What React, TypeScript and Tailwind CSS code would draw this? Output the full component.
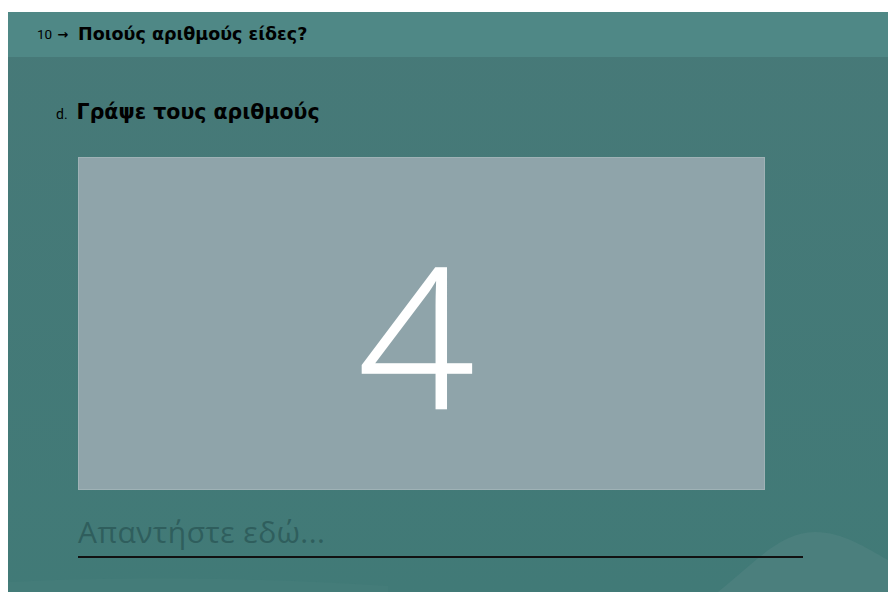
import React from 'react';

// Question card: header prompt, sub-question, image slot with the number, answer field
export default function App() {
  return (
    <div className="w-[888px] h-[592px] overflow-hidden bg-white pl-2 pt-3" style={{ fontFamily: 'Roboto, "Liberation Sans", sans-serif' }}>
      <div className="relative w-[880px] h-[580px] flex flex-col bg-gradient-to-b from-[#477978] to-[#417a77] overflow-hidden">
        {/* soft background waves */}
        <svg className="absolute left-0 bottom-0" width="880" height="80" viewBox="0 0 880 80">
          <path d="M710 80 C 745 52, 772 20, 807 20 C 835 20, 858 36, 880 48 L880 80 Z" fill="#4b7f7d" />
          <path d="M0 70 C 120 64, 260 66, 380 74 L380 80 L0 80 Z" fill="#447c79" />
        </svg>

        <div className="h-[45px] shrink-0 bg-[#4f8886] flex items-center pl-[29px] text-black">
          <span className="text-[13.5px] leading-none">10</span>
          <span className="text-[13px] font-bold ml-[5px] leading-none" style={{ fontFamily: '"DejaVu Sans", sans-serif' }}>→</span>
          <span className="text-[17.5px] font-bold ml-[10px] leading-none" style={{ fontFamily: '"DejaVu Sans", Verdana, sans-serif' }}>
            Ποιούς αριθμούς είδες?
          </span>
        </div>

        <div className="relative flex flex-col pl-[48px] pt-[40px]">
          <div className="flex items-baseline text-black">
            <span className="text-[14px]">d.</span>
            <span className="ml-[9px] text-[20.5px] font-bold" style={{ fontFamily: '"DejaVu Sans", Verdana, sans-serif' }}>
              Γράψε τους αριθμούς
            </span>
          </div>

          <div className="ml-[22px] mt-[29px] w-[687px] h-[333px] bg-[#8fa4aa] border border-[#9fb2b6] flex items-center justify-center">
            <span className="text-white text-[196px] font-light leading-none mt-[20px] -ml-[12px] scale-x-[1.04] [-webkit-text-stroke:1.5px_white]" style={{ fontFamily: '"Open Sans", Roboto, sans-serif' }}>4</span>
          </div>

          <div className="ml-[22px] mt-[24px] w-[725px] border-b-2 border-[#111]">
            <div className="text-[30px] tracking-[0.5px] text-[#2f5e5d] pb-[6px] leading-[36px]" style={{ fontFamily: '"Open Sans", Roboto, sans-serif' }}>
              Απαντήστε εδώ...
            </div>
          </div>
        </div>
      </div>
    </div>
  );
}
